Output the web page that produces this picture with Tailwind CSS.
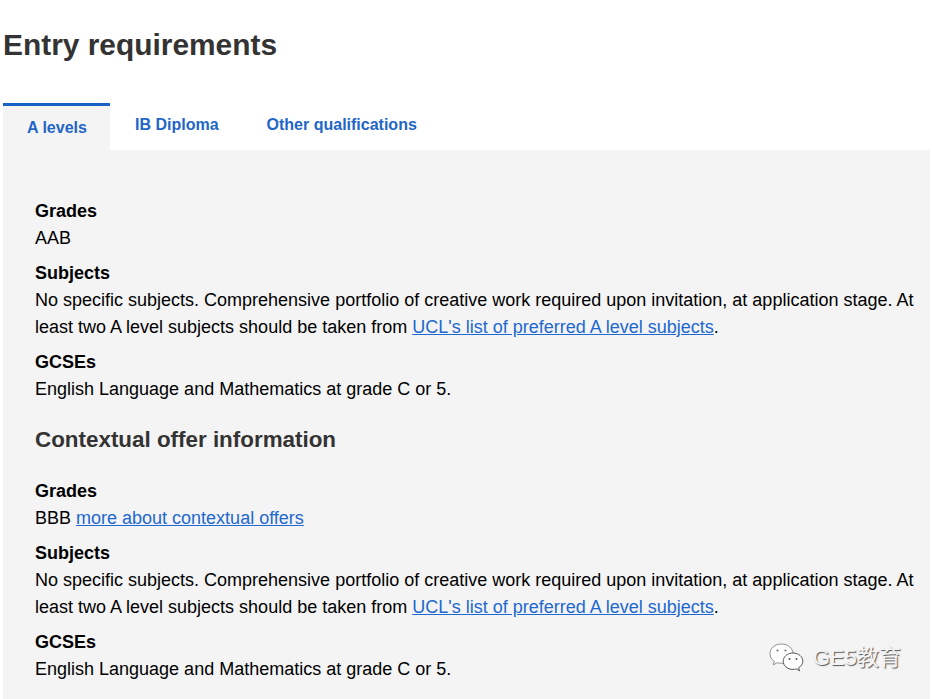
<!DOCTYPE html>
<html lang="en">
<head>
    <meta charset="UTF-8">
    <title>Entry requirements</title>
    <script src="https://cdn.jsdelivr.net/npm/@tailwindcss/browser@4"></script>
</head>
<body class="bg-white font-['Liberation_Sans',Arial,sans-serif] text-black h-[699px] overflow-hidden relative">
    <div class="pl-[3px] pr-[2px]">
        <h1 class="pt-[27px] h-[103px] text-[29.9px] leading-[36px] font-bold text-[#333]">Entry requirements</h1>

        <!-- tabs -->
        <div class="flex h-[47px] text-[16px] font-bold text-[#1f66c8]">
            <div class="w-[107px] bg-[#f4f4f4] border-t-[3px] border-[#1a63c6] pt-[13px] pl-[24px] leading-[18px]">A levels</div>
            <div class="pl-[25px] pt-[13px] leading-[18px]">IB Diploma</div>
            <div class="pl-[48px] pt-[13px] leading-[18px]">Other qualifications</div>
        </div>

        <!-- panel -->
        <div class="bg-[#f4f4f4] h-[549px] pl-[32px] pt-[48px] text-[18px] leading-[27px]">
            <p class="font-bold">Grades</p>
            <p>AAB</p>
            <p class="font-bold mt-[8px]">Subjects</p>
            <p>No specific subjects. Comprehensive portfolio of creative work required upon invitation, at application stage. At<br>least two A level subjects should be taken from <a href="#" class="text-[#2168d0] underline">UCL's list of preferred A level subjects</a>.</p>
            <p class="font-bold mt-[8px]">GCSEs</p>
            <p>English Language and Mathematics at grade C or 5.</p>

            <h2 class="mt-[23px] mb-[24px] text-[22.4px] leading-[28px] font-bold text-[#333]">Contextual offer information</h2>

            <p class="font-bold">Grades</p>
            <p>BBB <a href="#" class="text-[#2168d0] underline">more about contextual offers</a></p>
            <p class="font-bold mt-[8px]">Subjects</p>
            <p>No specific subjects. Comprehensive portfolio of creative work required upon invitation, at application stage. At<br>least two A level subjects should be taken from <a href="#" class="text-[#2168d0] underline">UCL's list of preferred A level subjects</a>.</p>
            <p class="font-bold mt-[8px]">GCSEs</p>
            <p>English Language and Mathematics at grade C or 5.</p>
        </div>
    </div>

    <!-- watermark -->
    <div class="absolute left-[767px] top-[642px] flex items-center gap-[8px]">
        <svg width="38" height="32" viewBox="0 0 38 32">
            <path d="M14.5 2C7.6 2 3 6.4 3 11.8c0 3.2 1.6 5.8 4.3 7.6l-1 3.4 4-2.1c1.4.4 2.8.6 4.2.6 6.6 0 11.5-4.4 11.5-9.5S21.4 2 14.5 2z" fill="#fff" stroke="#777" stroke-width="0.8"/>
            <path d="M26 11c-5.5 0-9.8 3.7-9.8 8.2s4.3 8.2 9.8 8.2c1.1 0 2.2-.2 3.2-.5l3.3 1.9-.9-3c2.5-1.5 4.2-3.9 4.2-6.6 0-4.5-4.3-8.2-9.8-8.2z" fill="#fff" stroke="#444" stroke-width="0.9"/>
            <circle cx="10.5" cy="8.5" r="1.1" fill="#777"/>
            <circle cx="18.5" cy="8.5" r="1.1" fill="#777"/>
            <circle cx="22.5" cy="17" r="1" fill="#555"/>
            <circle cx="29.5" cy="17" r="1" fill="#555"/>
        </svg>
        <span class="text-[22px] leading-[30px] text-[#f4f4f4] [text-shadow:1px_1px_1px_#555] font-['Liberation_Sans','Noto_Sans_CJK_SC',sans-serif]">GE5教育</span>
    </div>
</body>
</html>
